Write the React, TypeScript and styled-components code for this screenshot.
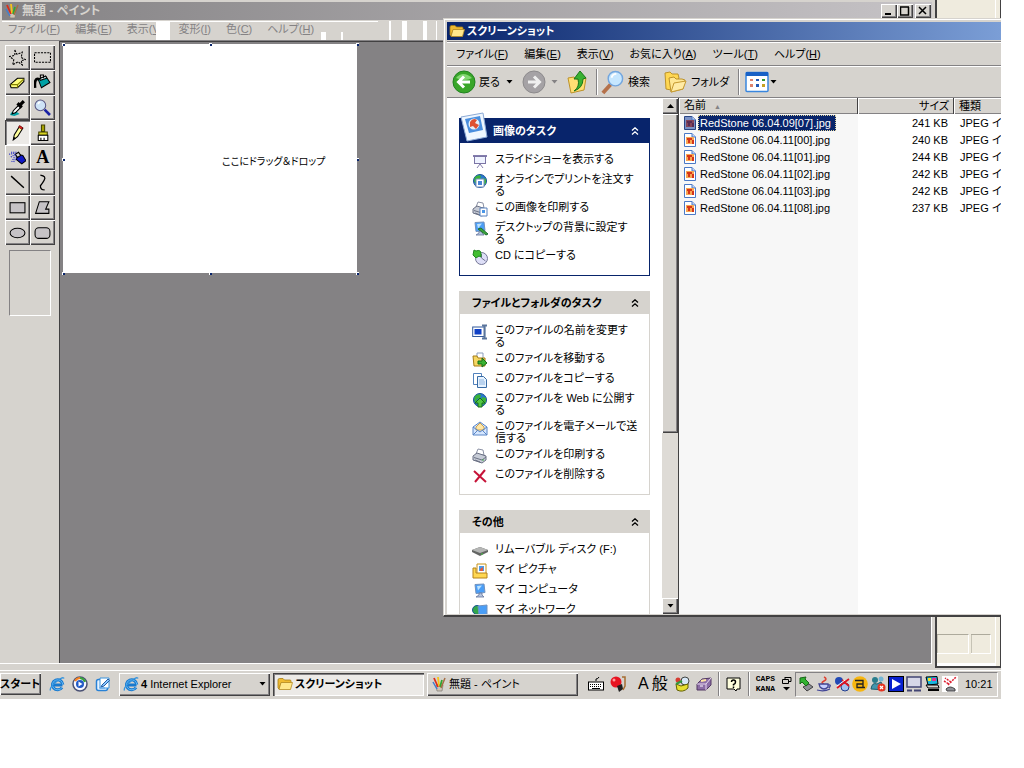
import React from "react";
import styled, { createGlobalStyle, css } from "styled-components";

const face = "#d6d3ce";
const shade = "#848284";
const dark = "#424142";
const navy = "#08246b";

const GlobalStyle = createGlobalStyle`
  * { box-sizing: border-box; }
  body { margin: 0; background: #fff; }
  body, button, table {
    font-family: "Liberation Sans", "Noto Sans CJK JP", sans-serif;
    font-size: 11px;
    line-height: 12px;
    color: #000;
    font-feature-settings: "palt";
  }
  button { border: 0; padding: 0; margin: 0; background: none; white-space: nowrap; }
  h1, h2 { margin: 0; font-size: 11px; line-height: 16px; white-space: nowrap; }
  svg { display: block; flex: none; }
`;

const raised = css`
  background: ${face};
  box-shadow: inset 1px 1px #fff, inset -1px -1px ${dark}, inset -2px -2px ${shade};
`;
const pressed = css`
  background: #eceae7;
  box-shadow: inset 1px 1px ${dark}, inset 2px 2px ${shade}, inset -1px -1px #fff;
`;

const Screen = styled.div`
  position: relative;
  margin-right: 23px;
  background: ${face};
  overflow: hidden;
`;
const Desktop = styled.div`
  display: flex;
  height: 668px;
`;

/* Paint window */
const PaintWindow = styled.section`
  flex: 1;
  min-width: 0;
  display: flex;
  flex-direction: column;
  padding: 2px 2px 4px 0;
  border-right: 1px solid ${face};
`;
const PaintTitle = styled.header`
  display: flex;
  align-items: center;
  gap: 2px;
  height: 18px;
  margin-left: 2px;
  padding: 0 1px 0 2px;
  background: linear-gradient(to right, #848284, #c6c3c6);
  color: ${face};
  h1 { flex: 1; font-size: 12px; }
`;
const CaptionButtons = styled.div`
  display: flex;
  button { ${raised} width: 16px; height: 14px; display: grid; place-items: center; }
  button:last-child { margin-left: 2px; }
`;
const PaintMenu = styled.nav`
  position: relative;
  display: flex;
  align-items: center;
  gap: 15px;
  height: 21px;
  padding: 0 8px 2px;
  border-bottom: 1px solid ${shade};
  button { color: ${shade}; }
`;
const Smudge = styled.i<{ $x: number; $w: number; $y?: number; $h?: number }>`
  position: absolute;
  left: ${(p) => p.$x}px;
  top: ${(p) => p.$y ?? 1}px;
  width: ${(p) => p.$w}px;
  height: ${(p) => p.$h ?? 19}px;
  background: #fff;
`;
const PaintBody = styled.div`
  flex: 1;
  display: flex;
  min-height: 0;
  border-bottom: 1px solid #fff;
`;
const ToolBox = styled.aside`
  width: 59px;
  padding: 4px 4px 0 5px;
`;
const ToolGrid = styled.div`
  display: grid;
  grid-template-columns: 25px 25px;
  grid-auto-rows: 25px;
`;
const Tool = styled.button<{ $on?: boolean }>`
  display: grid;
  place-items: center;
  ${(p) => (p.$on ? pressed : raised)}
`;
const ToolOptions = styled.div`
  width: 42px;
  height: 66px;
  margin: 5px 4px;
  border: 1px solid;
  border-color: ${shade} #fff #fff ${shade};
`;
const Workspace = styled.div`
  flex: 1;
  padding: 2px 0 0 3px;
  background: ${shade};
  border-left: 1px solid ${dark};
  border-top: 1px solid ${dark};
  border-right: 1px solid #fff;
`;
const Canvas = styled.div`
  position: relative;
  width: 294px;
  height: 229px;
  padding: 112px 0 0 159px;
  background: #fff;
  font-size: 10px;
  white-space: nowrap;
`;
const Handle = styled.i<{ $x: string; $y: string }>`
  position: absolute;
  left: ${(p) => p.$x};
  top: ${(p) => p.$y};
  width: 3px;
  height: 3px;
  margin: -1px;
  background: ${navy};
  box-shadow: inset 1px 1px #fff;
`;

/* Window behind the others, seen at its right edge */
const BackWindow = styled.aside`
  width: 66px;
  display: flex;
  align-items: flex-end;
  gap: 2px;
  padding: 0 8px 12px 0;
  background: #efebde;
  border: 2px solid ${dark};
  border-top: 0;
  border-right-width: 1px;
  box-shadow: inset -4px 0 #efebde, inset -5px -3px #fff;
`;
const BackPane = styled.span<{ $w: number }>`
  width: ${(p) => p.$w}px;
  height: 20px;
  border-top: 1px solid #adaa9c;
  border-bottom: 1px solid #fff;
  border-right: 1px solid #fff;
  box-shadow: inset 1px 0 #c6c3b5;
`;

/* Explorer window */
const ExplorerWindow = styled.section`
  position: absolute;
  left: 443px;
  right: 0;
  top: 18px;
  height: 599px;
  display: flex;
  flex-direction: column;
  padding: 2px 0 1px 3px;
  background: ${face};
  border: 1px solid ${face};
  border-width: 1px 0 2px 1px;
  border-bottom-color: ${dark};
  box-shadow: inset 1px 1px #fff;
`;
const ExplorerTitle = styled.header`
  display: flex;
  align-items: center;
  gap: 2px;
  height: 18px;
  margin: 1px 0 1px;
  padding: 0 2px;
  background: linear-gradient(to right, ${navy}, #7b9ed6);
  color: #fff;
`;
const ExplorerMenu = styled.nav`
  display: flex;
  align-items: center;
  gap: 16px;
  height: 25px;
  padding: 1px 9px 0;
  border-top: 1px solid ${shade};
  border-bottom: 1px solid ${shade};
  box-shadow: inset 0 1px #fff;
`;
const ExplorerTools = styled.div`
  display: flex;
  align-items: center;
  height: 32px;
  padding-left: 5px;
  border-top: 1px solid #fff;
  border-bottom: 1px solid ${shade};
`;
const ToolbarButton = styled.button<{ $w: number; $gap?: number; $indent?: number }>`
  display: flex;
  align-items: center;
  gap: ${(p) => p.$gap ?? 3}px;
  width: ${(p) => p.$w}px;
  padding-left: ${(p) => p.$indent ?? 0}px;
`;
const Divider = styled.span<{ $h: number }>`
  width: 2px;
  height: ${(p) => p.$h}px;
  border-left: 1px solid ${shade};
  border-right: 1px solid #fff;
`;
const ExplorerBody = styled.div`
  flex: 1;
  min-height: 0;
  display: flex;
`;
const TaskPane = styled.aside`
  width: 215px;
  padding: 20px 12px 0;
  background: #fff;
  overflow: hidden;
`;
const TaskGroup = styled.section<{ $main?: boolean }>`
  margin-bottom: 15px;
  border: 1px solid ${(p) => (p.$main ? navy : face)};
  border-top: 0;
`;
const TaskHead = styled.button<{ $main?: boolean }>`
  position: relative;
  display: flex;
  align-items: center;
  justify-content: space-between;
  width: 100%;
  height: ${(p) => (p.$main ? 25 : 23)}px;
  padding: 0 10px 0 ${(p) => (p.$main ? 33 : 12)}px;
  background: ${(p) => (p.$main ? navy : face)};
  color: ${(p) => (p.$main ? "#fff" : "#000")};
`;
const HeadPicture = styled.span`
  position: absolute;
  left: 0;
  bottom: 1px;
`;
const TaskList = styled.ul`
  display: flex;
  flex-direction: column;
  gap: 4px;
  margin: 0;
  padding: 10px 0 10px 12px;
  list-style: none;
`;
const TaskLink = styled.a`
  display: flex;
  gap: 7px;
  color: #000;
  text-decoration: none;
  white-space: nowrap;
`;
const ScrollBar = styled.div`
  width: 16px;
  display: flex;
  flex-direction: column;
  background: #dedbd6;
`;
const ScrollButton = styled.button`
  ${raised}
  height: 16px;
  display: grid;
  place-items: center;
`;
const Thumb = styled.div`
  ${raised}
  height: 319px;
  margin-bottom: auto;
`;
const FileList = styled.div`
  flex: 1;
  min-width: 0;
  overflow: hidden;
  border-left: 1px solid ${dark};
  background: linear-gradient(to right, #f7f7f7 179px, #fff 179px);
`;
const FileTable = styled.table`
  width: 100%;
  table-layout: fixed;
  border-collapse: collapse;
  th {
    height: 16px;
    padding: 0 5px;
    background: ${face};
    box-shadow: inset -1px 0 ${dark}, inset 1px 1px #fff, inset 0 -1px ${shade};
    font-weight: normal;
    text-align: left;
    white-space: nowrap;
  }
  th:last-child { box-shadow: inset 1px 1px #fff, inset 0 -1px ${shade}; }
  td { height: 17px; padding: 0 6px; white-space: nowrap; overflow: hidden; }
  td:first-child { padding: 0 0 0 4px; }
  td:nth-child(2), th:nth-child(2) { text-align: right; }
`;
const FileName = styled.span<{ $on?: boolean }>`
  display: flex;
  align-items: center;
  gap: 1px;
  span {
    padding: 1px 4px 1px 1px;
    border: 1px dotted ${(p) => (p.$on ? "#ded39c" : "transparent")};
    background: ${(p) => (p.$on ? navy : "none")};
    color: ${(p) => (p.$on ? "#fff" : "#000")};
  }
`;
const SortMark = styled.small`
  margin-left: 8px;
  color: ${shade};
  font-size: 7px;
`;

/* Task bar */
const TaskBar = styled.footer`
  display: flex;
  align-items: center;
  height: 31px;
  padding: 2px 3px 3px 0;
  border-top: 2px solid ${face};
  box-shadow: inset 0 1px #fff;
`;
const StartButton = styled.button`
  ${raised}
  width: 41px;
  height: 22px;
  font-weight: bold;
  text-align: left;
`;
const QuickLaunch = styled.div`
  display: flex;
  gap: 7px;
  padding: 0 8px;
`;
const WindowButtons = styled.div`
  display: flex;
  gap: 3px;
`;
const WindowButton = styled.button<{ $on?: boolean }>`
  ${(p) => (p.$on ? pressed : raised)}
  display: flex;
  align-items: center;
  gap: 2px;
  width: 151px;
  height: 23px;
  padding: 0 4px;
  font-weight: ${(p) => (p.$on ? "bold" : "normal")};
  svg:last-child:not(:first-child) { margin-left: auto; }
`;
const LanguageBar = styled.div`
  flex: 1;
  display: flex;
  align-items: center;
  justify-content: flex-end;
  gap: 6px;
`;
const InputMode = styled.span<{ $last?: boolean }>`
  font-size: 16px;
  line-height: 18px;
  margin-left: ${(p) => (p.$last ? -3 : 6)}px;
`;
const LockKeys = styled.span`
  font: bold 8px/10px "Liberation Mono", monospace;
`;
const Tray = styled.div`
  flex: none;
  display: flex;
  align-items: center;
  gap: 2px;
  width: 203px;
  height: 25px;
  padding-left: 2px;
  border: 1px solid;
  border-color: ${shade} #fff #fff ${shade};
  time { margin-left: 5px; }
`;

type IconProps = { s?: number; w?: number; b?: number; children: React.ReactNode };
const Icon = ({ s = 16, b = 16, w = s, children }: IconProps) => (
  <svg width={w} height={s} viewBox={`0 0 ${(b * w) / s} ${b}`} fill="none" aria-hidden="true">{children}</svg>
);

const FolderIcon = () => (
  <Icon>
    <path d="M1 4q0-1.500 1.500-1.500H6L7.500 4H13q1 0 1 1v2H4L2 13 1 12z" fill="#efba31" stroke="#a57d18" strokeWidth=".8" />
    <path d="M4 6.500h11.500L13.500 13.500H2z" fill="#ffe78c" stroke="#b58a21" strokeWidth=".8" />
  </Icon>
);
const PaintIcon = () => (
  <Icon>
    <path d="M5 9h7l-1 6H6z" fill="#cec3b5" stroke="#7b7973" strokeWidth=".7" />
    <path d="M3 2l4 9" stroke="#de2c18" strokeWidth="1.800" />
    <path d="M7 1l1 9" stroke="#f7c318" strokeWidth="1.800" />
    <path d="M11 4l-2 7" stroke="#31a631" strokeWidth="1.800" />
    <path d="M14 2l-4 10" stroke="#a56d42" strokeWidth="1.500" />
    <path d="M2 6l4 7" stroke="#427dce" strokeWidth="1.500" />
  </Icon>
);
const IeIcon = () => (
  <Icon>
    <path d="M13.500 9H4.500M13 11.500a5.200 5 0 1 1 .8-3" stroke="#1879ce" strokeWidth="3" />
    <path d="M13 11.500a5.200 5 0 1 1 .8-3" stroke="#63baf7" strokeWidth="1" />
    <path d="M1.500 14.500Q0 12 7 6T15 2.500" stroke="#3192de" strokeWidth="1.300" />
  </Icon>
);
const PlayerIcon = () => (
  <Icon>
    <circle cx="8" cy="8" r="7" fill="#f7f7ff" stroke="#4a5173" strokeWidth="1.500" />
    <path d="M3 5a6 6 0 0 1 5-3" stroke="#f78221" strokeWidth="2" />
    <path d="M8 2a6 6 0 0 1 5 4" stroke="#39a639" strokeWidth="2" />
    <circle cx="8" cy="8" r="4" fill="#2159c6" />
    <path d="M6.500 5.500L10.500 8l-4 2.500z" fill="#fff" />
  </Icon>
);
const ShowDesktopIcon = () => (
  <Icon>
    <rect x="1.500" y="3.500" width="11" height="11" rx="2" fill="#e7f3ff" stroke="#2982d6" strokeWidth="1.500" />
    <path d="M5 2h9v10H5z" fill="#fff" stroke="#3992de" />
    <path d="M7 9l6-6 1.500 1.500L9 10l-3 1z" fill="#8cc7ff" stroke="#215da5" />
    <path d="M4 12h6" stroke="#5aa2e7" />
  </Icon>
);
const Globe = () => (
  <>
    <circle cx="8" cy="8" r="6.500" fill="#2979ce" stroke="#185194" />
    <path d="M3 4q4-3 6-1l-1 3-3 1-1 4-2-3zM10 5l4 1v4l-3 3-2-4z" fill="#39b239" />
  </>
);
const Printer = () => (
  <>
    <path d="M4 6l2-5 5 1 1 5z" fill="#fff" stroke="#8c92a5" />
    <path d="M1 8l4-3 9 3v4l-4 3-9-3z" fill="#c6cbd6" stroke="#6b7184" />
    <path d="M2 9.500l8 2.500 4-3M3 12l5 2" stroke="#6b7184" />
    <circle cx="11" cy="12" r=".8" fill="#39b239" />
  </>
);
const Monitor = () => (
  <>
    <path d="M3 1.500l9-.5 1 8.500-9 1z" fill="#4a9ef7" stroke="#7392bd" />
    <path d="M5 3l5-.5-4 5z" fill="#bde3ff" />
    <path d="M7 10v2l-3 2h8l-2-2v-2z" fill="#b5c3de" stroke="#63759c" strokeWidth=".8" />
  </>
);
const Chevrons = () => (
  <Icon s={8} b={8}><path d="M1 3.500L4 .8l3 2.700M1 7.500L4 4.800l3 2.700" stroke="currentColor" strokeWidth="1.300" /></Icon>
);
const Arrow = ({ up, c = "#000" }: { up?: boolean; c?: string }) => (
  <svg width="7" height="4" viewBox="0 0 7 4" aria-hidden="true"><path d={up ? "M0 4h7L3.500 0z" : "M.5 0h6L3.500 3.500z"} fill={c} /></svg>
);
const JpegIcon = ({ on }: { on?: boolean }) => (
  <Icon s={14} b={14}>
    <path d="M1.500.5H9L12.500 4v9.500h-11z" fill={on ? "#7b92c6" : "#fff"} stroke={on ? "#294584" : "#4a79c6"} />
    <path d="M9 .5V4h3.500" fill="#bdd3f7" stroke="#4a79c6" />
    <rect x="3" y="4" width="8" height="7" fill={on ? "#84455a" : "#f7a652"} />
    <path d="M4 5h5v2H7v3H5V7H4zM9 7h2v4H9z" fill={on ? "#5a2c52" : "#d63418"} />
  </Icon>
);

const toolIcons: [string, React.ReactNode][] = [
  ["自由選択", <path d="M5.500 1l2 4 5-2-1 5 4 2-4 1 1 4-4-3-5 3 1-5-4-3 5-1z" stroke="#000" strokeDasharray="2 1" />],
  ["選択", <rect x=".5" y="3.500" width="15" height="9" stroke="#000" strokeDasharray="2 1" />],
  ["消しゴム", <><path d="M1 10l7-6h6v3l-6 6H2z" fill="#ffff7b" stroke="#000" /><path d="M1.500 10H8l6-5.500M8 10v3" stroke="#848200" /></>],
  ["塗りつぶし", <><path d="M4 5l7-3 4 6-8 5z" fill="#00a2a5" stroke="#000" /><path d="M5 4.500l6-2.500 1 2-6 2z" fill="#d6f3f7" stroke="#000" /><path d="M5 5Q0 3 1 13" stroke="#000" strokeWidth="2.500" /><path d="M6 5V1h3v3" stroke="#000" /></>],
  ["色の選択", <><path d="M1 15q1-4 6-3l3 2-5 2z" fill="#00a2a5" /><path d="M3 14l1-3 5-5 2 2-5 5z" fill="#fff" stroke="#000" /><path d="M8 4l4 4M9.500 6.500L14 2" stroke="#000" strokeWidth="3" /></>],
  ["拡大と縮小", <><circle cx="6" cy="6" r="5" fill="#cee3f7" stroke="#5a5984" /><path d="M4 5q0-2 2-2" stroke="#fff" strokeWidth="1.500" /><path d="M10 10l5 5" stroke="#1820a5" strokeWidth="2.500" /></>],
  ["鉛筆", <><path d="M4 15l1-5 5-8 3 2-5 8z" fill="#ffff9c" stroke="#000" /><path d="M10 1.500l3 2-1 1.500-3-2z" fill="#e72421" stroke="#630000" strokeWidth=".6" /><path d="M4 15l.5-3 2 1.500z" fill="#000" /></>],
  ["ブラシ", <><path d="M7 1h3v6H7z" fill="#a5a200" stroke="#424100" /><path d="M4.500 7.500h8v3h-8z" fill="#d6d321" stroke="#424100" /><path d="M4 10.500h9v5H4z" fill="#fff" stroke="#000" /><path d="M6.500 13v2M9.500 13v2" stroke="#000" /></>],
  ["エアブラシ", <><path d="M8 5l5 1 3 5-4 3-5-4z" fill="#1018c6" stroke="#000" /><path d="M6 5l3-2 2 3-3 2z" fill="#d6d3ce" stroke="#000" /><path d="M7 3H1M6 5L1 8M6 6l-4 7M5 4L0 5M7 8l-3 5" stroke="#1018c6" strokeDasharray="1 1" /></>],
  ["テキスト", <text x="2" y="13" fontFamily="Liberation Serif" fontWeight="bold" fontSize="17" fill="#000">A</text>],
  ["直線", <path d="M2 2l12 11" stroke="#000" strokeWidth="1.300" />],
  ["曲線", <path d="M6 1q6 1 3.500 5T6 11q0 4 4 4" stroke="#000" strokeWidth="1.200" />],
  ["四角形", <rect x="1" y="3.500" width="14" height="9.500" fill="#c6c3c6" stroke="#000" />],
  ["多角形", <path d="M5 2.500h9l-3 7h3v4H1.500z" fill="#c6c3c6" stroke="#000" />],
  ["楕円", <ellipse cx="8" cy="8.500" rx="7" ry="4.500" fill="#c6c3c6" stroke="#000" />],
  ["角丸四角形", <rect x="1" y="3.500" width="14" height="10" rx="3.500" fill="#c6c3c6" stroke="#000" />],
];

type Task = { icon: React.ReactNode; lines: string[] };
const pictureTasks: Task[] = [
  { icon: <><path d="M8 10v2M8 11l-3 4M8 11l3 4" stroke="#847dad" /><path d="M1 3h14" stroke="#847dad" strokeWidth="2" /><rect x="2.500" y="3.500" width="11" height="7" fill="#eff3ff" stroke="#7b75a5" /></>, lines: ["スライドショーを表示する"] },
  { icon: <><Globe /><path d="M4 6h8v8H4z" fill="#fff" stroke="#738ebd" /><path d="M6 8h4v4H6z" fill="#4a86d6" /></>, lines: ["オンラインでプリントを注文す", "る"] },
  { icon: <><Printer /><path d="M8 7h7v8H8z" fill="#fff" stroke="#5a82bd" /><path d="M10 9h3v3h-3z" fill="#4a96e7" /></>, lines: ["この画像を印刷する"] },
  { icon: <><Monitor /><path d="M6 8l3-1 7 6-2 1z" fill="#39a639" stroke="#216d31" /></>, lines: ["デスクトップの背景に設定す", "る"] },
  { icon: <><circle cx="9.500" cy="9.500" r="6" fill="#dedff7" stroke="#737594" /><path d="M9.500 9l4 3M9.500 9V5" stroke="#737594" /><path d="M2 1l2 1q5-2 5 3v3L7 7 4 9 1 6z" fill="#42be31" stroke="#218621" /></>, lines: ["CD にコピーする"] },
];
const fileTasks: Task[] = [
  { icon: <><rect x=".7" y="3" width="12" height="9.500" fill="#fff" stroke="#31599c" /><rect x="2.500" y="5" width="7" height="5.500" fill="#1041c6" /><path d="M10 1.500h5M10 14.500h5M12.500 2v12" stroke="#5a759c" strokeWidth="2" /></>, lines: ["このファイルの名前を変更す", "る"] },
  { icon: <><path d="M5 1h6v8H5z" fill="#fff" stroke="#8c9ebd" /><path d="M1 4h4l1 2h7v8H2z" fill="#f7d763" stroke="#a57d18" /><path d="M6 9h4V6l5 5-5 4v-3H6z" fill="#39b231" stroke="#186d18" /></>, lines: ["このファイルを移動する"] },
  { icon: <><path d="M1.500 1.500h8v11h-8z" fill="#fff" stroke="#5282bd" /><path d="M5.500 4.500h6l3 3v8h-9z" fill="#e7f3ff" stroke="#396ba5" /><path d="M7 8h5M7 10h6M7 12h6" stroke="#8cb2de" /></>, lines: ["このファイルをコピーする"] },
  { icon: <><Globe /><path d="M8 6l5 5h-3v4H6v-4H3z" fill="#52c742" stroke="#186d18" /></>, lines: ["このファイルを Web に公開す", "る"] },
  { icon: <><path d="M1 7l7-5 7 5v8H1z" fill="#d6e7ff" stroke="#5a86c6" /><path d="M4 7l4-4 4 4v3H4z" fill="#ffe7a5" stroke="#c69e52" /><path d="M1 7l7 5 7-5M1 15l5-5M15 15l-5-5" stroke="#5a86c6" /></>, lines: ["このファイルを電子メールで送", "信する"] },
  { icon: <Printer />, lines: ["このファイルを印刷する"] },
  { icon: <path d="M2 3l12 11M13 2L3 14" stroke="#c61439" strokeWidth="2" />, lines: ["このファイルを削除する"] },
];
const otherPlaces: Task[] = [
  { icon: <><path d="M0 7l8-3 8 3v2l-8 4-8-4z" fill="#636563" /><path d="M0 7l8-3 8 3-8 3z" fill="#b5b6b5" /><circle cx="10" cy="11" r=".8" fill="#39d639" /></>, lines: ["リムーバブル ディスク (F:)"] },
  { icon: <><path d="M5 1h9v11H5z" fill="#fff" stroke="#c69218" /><path d="M7 3h5v5H7z" fill="#4a9ae7" /><path d="M8 6l3-2v4H8z" fill="#de5a42" /><path d="M1 5h3v5h11v5H1z" fill="#ffd752" stroke="#b58218" /></>, lines: ["マイ ピクチャ"] },
  { icon: <Monitor />, lines: ["マイ コンピュータ"] },
  { icon: <><circle cx="5" cy="7" r="4.500" fill="#31a64a" stroke="#185194" /><path d="M6 3l9-1v9l-8 1z" fill="#4a9ef7" stroke="#7392bd" /></>, lines: ["マイ ネットワーク"] },
];

const TaskItems = ({ items }: { items: Task[] }) => (
  <TaskList>
    {items.map((t) => (
      <li key={t.lines[0]}>
        <TaskLink href="#">
          <Icon>{t.icon}</Icon>
          <span>{t.lines.map((l, i) => <React.Fragment key={l}>{i > 0 && <br />}{l}</React.Fragment>)}</span>
        </TaskLink>
      </li>
    ))}
  </TaskList>
);

const MenuItems = ({ items }: { items: [string, string][] }) => (
  <>{items.map(([t, k]) => <button key={t}>{t}(<u>{k}</u>)</button>)}</>
);

const files: [string, string][] = [
  ["RedStone 06.04.09[07].jpg", "241 KB"],
  ["RedStone 06.04.11[00].jpg", "240 KB"],
  ["RedStone 06.04.11[01].jpg", "244 KB"],
  ["RedStone 06.04.11[02].jpg", "242 KB"],
  ["RedStone 06.04.11[03].jpg", "242 KB"],
  ["RedStone 06.04.11[08].jpg", "237 KB"],
];

const trayIcons: React.ReactNode[] = [
  <><path d="M5 11l6-3 4 3-6 4z" fill="#8c8e94" stroke="#424142" /><path d="M2 2l6-1-1 2 4 4-3 3-4-4-2 2z" fill="#31b231" stroke="#186518" /></>,
  <><path d="M8 1q4 2 0 4t0 3" stroke="#de4131" strokeWidth="1.500" /><path d="M3 8h9v3q-4 4-8 0zM12 9q4-1 1 3M1 14q7 2 13-1" fill="#c6cfff" stroke="#424594" strokeWidth="1.300" /></>,
  <><circle cx="5" cy="5" r="4" fill="#2149b5" /><circle cx="11" cy="11" r="4" fill="#a5c3ef" stroke="#213c8c" /><path d="M3 12L15 3M8 4l7 6" stroke="#de1421" strokeWidth="1.800" /><path d="M3 10l8-6" stroke="#fff" /></>,
  <><circle cx="8" cy="8" r="7.800" fill="#f7b610" /><path d="M4 4.500h7v7h-6M11 8H5v3.500h8M3 4.500h3" stroke="#212021" strokeWidth="1.300" /></>,
  <><circle cx="5" cy="4" r="3" fill="#297d8c" /><circle cx="11" cy="3" r="2.500" fill="#73b6d6" /><path d="M1 13q1-7 6-5l4-2 4 8z" fill="#4296ad" stroke="#215d6b" /><circle cx="11.500" cy="11.500" r="4" fill="#e73421" /><path d="M10 10l3 3M13 10l-3 3" stroke="#fff" strokeWidth="1.300" /></>,
  <><rect x=".5" y=".5" width="15" height="15" fill="#0820ce" stroke="#000" /><path d="M4 3l9 5-9 5z" fill="#fff" /></>,
  <><rect x="1" y="1" width="14" height="10" fill="#d6d7e7" stroke="#424573" strokeWidth="1.500" /><path d="M1 14.500h5M8 14.500h7" stroke="#424573" strokeWidth="2" /></>,
  <><path d="M2 1l11-0.500 1 7.500-10 1z" fill="#18b6de" stroke="#000" /><path d="M4 2h3v3H4z" fill="#f7e321" /><path d="M8 2h4v3H8z" fill="#e73494" /><path d="M2 9h12l1 3H4z" fill="#d6d3ce" stroke="#000" /><path d="M4 14h11" stroke="#000" strokeWidth="2" /></>,
  <><rect width="16" height="16" fill="#fff" /><path d="M2 5l5 3M6 9l8-8M9 6L3 2" stroke="#de2031" strokeWidth="1.500" strokeDasharray="2 1" /><path d="M4 13q4-4 9 0v2H5z" fill="#8c8e94" stroke="#424142" /></>,
];

export default function App() {
  return (
    <>
      <GlobalStyle />
      <Screen>
        <Desktop>
          <PaintWindow>
            <PaintTitle>
              <PaintIcon />
              <h1>無題 - ペイント</h1>
              <CaptionButtons>
                <button aria-label="最小化"><Icon s={10} b={10}><path d="M1 8h6" stroke="#000" strokeWidth="2" /></Icon></button>
                <button aria-label="最大化"><Icon s={10} b={10}><path d="M.5 1v8h8V1M0 1h9" stroke="#000" strokeWidth="1.500" /></Icon></button>
                <button aria-label="閉じる"><Icon s={10} b={10}><path d="M1 1l7 7M8 1L1 8" stroke="#000" strokeWidth="1.500" /></Icon></button>
              </CaptionButtons>
            </PaintTitle>
            <PaintMenu>
              <MenuItems items={[["ファイル", "F"], ["編集", "E"], ["表示", "V"], ["変形", "I"], ["色", "C"], ["ヘルプ", "H"]]} />
              <Smudge $x={2} $w={376} $h={1} />
              <Smudge $x={156} $w={14} />
              <Smudge $x={321} $w={5} $y={12} $h={8} />
              <Smudge $x={341} $w={2} $y={12} $h={8} />
              <Smudge $x={389} $w={2} />
              <Smudge $x={402} $w={5} />
              <Smudge $x={423} $w={4} />
              <Smudge $x={436} $w={1} />
            </PaintMenu>
            <PaintBody>
              <ToolBox>
                <ToolGrid>
                  {toolIcons.map(([name, icon]) => (
                    <Tool key={name} aria-label={name} $on={name === "鉛筆"}><Icon s={17}>{icon}</Icon></Tool>
                  ))}
                </ToolGrid>
                <ToolOptions />
              </ToolBox>
              <Workspace>
                <Canvas>
                  ここにドラッグ＆ドロップ
                  {["0px", "50%", "100%"].map((x) =>
                    ["0px", "50%", "100%"].map((y) =>
                      x === "50%" && y === "50%" ? null : <Handle key={x + y} $x={x} $y={y} />
                    )
                  )}
                </Canvas>
              </Workspace>
            </PaintBody>
          </PaintWindow>
          <BackWindow>
            <BackPane $w={32} />
            <BackPane $w={20} />
          </BackWindow>
        </Desktop>

        <ExplorerWindow>
          <ExplorerTitle>
            <FolderIcon />
            <h1>スクリーンショット</h1>
          </ExplorerTitle>
          <ExplorerMenu>
            <MenuItems items={[["ファイル", "F"], ["編集", "E"], ["表示", "V"], ["お気に入り", "A"], ["ツール", "T"], ["ヘルプ", "H"]]} />
          </ExplorerMenu>
          <ExplorerTools>
            <ToolbarButton $w={70}>
              <Icon s={24} b={24}>
                <circle cx="12" cy="12" r="11" fill="#39a629" stroke="#218221" />
                <path d="M4 8q7-8 16 0-7 4-16 0z" fill="#84d773" />
                <path d="M18 12H7M12 6.500L6.500 12l5.500 5.500" stroke="#fff" strokeWidth="3" />
              </Icon>
              <span>戻る&nbsp;</span>
              <Arrow />
            </ToolbarButton>
            <ToolbarButton $w={44} $gap={5} aria-label="進む">
              <Icon s={24} b={24}>
                <circle cx="12" cy="12" r="11" fill="#a5a2a5" stroke="#8c8a8c" />
                <path d="M6 12h11M12 6.500l5.500 5.500-5.500 5.500" stroke="#efefef" strokeWidth="3" />
              </Icon>
              <Arrow c={shade} />
            </ToolbarButton>
            <ToolbarButton $w={30} aria-label="上へ">
              <Icon s={24} b={24}>
                <path d="M2 8l6-1 2 2 10-1-2 12-13 3z" fill="#ffdf73" stroke="#bd9229" />
                <path d="M8 21q6-4 4-12H8l6-8 6 7-3 1q0 9-9 12z" fill="#39b231" stroke="#187518" />
              </Icon>
            </ToolbarButton>
            <Divider $h={26} />
            <ToolbarButton $w={66} $indent={2}>
              <Icon s={25} b={26}>
                <path d="M3 24l8-9" stroke="#b5714a" strokeWidth="4" />
                <circle cx="16" cy="9" r="7.500" fill="#c6e7ff" stroke="#73a6de" strokeWidth="1.500" />
                <path d="M12 8q1-4 5-4" stroke="#fff" strokeWidth="2" />
              </Icon>
              <span>検索</span>
            </ToolbarButton>
            <ToolbarButton $w={74}>
              <Icon s={24} b={24}>
                <path d="M1 3l5-1 2 2h6l1 4-8 12-5-1z" fill="#ffd752" stroke="#bd9229" />
                <path d="M5 8l5-1 2 2h6l3 1-2 9-12 3z" fill="#ffe794" stroke="#bd9229" />
                <path d="M7 22l3-9 12-2-3 8z" fill="#ffeba5" stroke="#c69a31" />
              </Icon>
              <span>フォルダ</span>
            </ToolbarButton>
            <Divider $h={26} />
            <ToolbarButton $w={40} $gap={1} $indent={5} aria-label="表示">
              <Icon s={24} b={24}>
                <rect x="1" y="2.500" width="22" height="19" rx="1" fill="#fff" stroke="#3986de" strokeWidth="1.500" />
                <path d="M1 4h22" stroke="#1861c6" strokeWidth="4" />
                <path d="M5 9h3v2H5zM5 14h3v3H5z" fill="#de826b" />
                <path d="M11 9h3v2h-3zM11 14h3v3h-3z" fill="#2159b5" />
                <path d="M17 9h3v2h-3z" fill="#319631" />
                <path d="M17 14h3v3h-3z" fill="#c6a221" />
              </Icon>
              <Arrow />
            </ToolbarButton>
          </ExplorerTools>
          <ExplorerBody>
            <TaskPane>
              <TaskGroup $main>
                <TaskHead $main>
                  <HeadPicture>
                    <Icon s={30} b={30}>
                      <path d="M1 5L23 1l4 24-20 4z" fill="#eff7ff" stroke="#8caad6" />
                      <path d="M5 7l15-3 3 14-14 3z" fill="#4a8ede" />
                      <circle cx="14" cy="12" r="5.500" fill="#e7eff7" />
                      <path d="M10 10q3-5 7-2l-2 3 4 2-3 4-3-3-3 1z" fill="#de5131" />
                    </Icon>
                  </HeadPicture>
                  <h2>画像のタスク</h2>
                  <Chevrons />
                </TaskHead>
                <TaskItems items={pictureTasks} />
              </TaskGroup>
              <TaskGroup>
                <TaskHead><h2>ファイルとフォルダのタスク</h2><Chevrons /></TaskHead>
                <TaskItems items={fileTasks} />
              </TaskGroup>
              <TaskGroup>
                <TaskHead><h2>その他</h2><Chevrons /></TaskHead>
                <TaskItems items={otherPlaces} />
              </TaskGroup>
            </TaskPane>
            <ScrollBar>
              <ScrollButton aria-label="上へスクロール"><Arrow up /></ScrollButton>
              <Thumb />
              <ScrollButton aria-label="下へスクロール"><Arrow /></ScrollButton>
            </ScrollBar>
            <FileList>
              <FileTable>
                <colgroup><col style={{ width: 179 }} /><col style={{ width: 96 }} /><col /></colgroup>
                <thead>
                  <tr><th>名前<SortMark>▲</SortMark></th><th>サイズ</th><th>種類</th></tr>
                </thead>
                <tbody>
                  {files.map(([name, size], i) => (
                    <tr key={name}>
                      <td><FileName $on={i === 0}><JpegIcon on={i === 0} /><span>{name}</span></FileName></td>
                      <td>{size}</td>
                      <td>JPEG イ</td>
                    </tr>
                  ))}
                </tbody>
              </FileTable>
            </FileList>
          </ExplorerBody>
        </ExplorerWindow>

        <TaskBar>
          <StartButton>スタート</StartButton>
          <QuickLaunch><IeIcon /><PlayerIcon /><ShowDesktopIcon /></QuickLaunch>
          <WindowButtons>
            <WindowButton><IeIcon /><span><b>4</b> Internet Explorer</span><Arrow /></WindowButton>
            <WindowButton $on><FolderIcon /><span>スクリーンショット</span></WindowButton>
            <WindowButton><PaintIcon /><span>無題 - ペイント</span></WindowButton>
          </WindowButtons>
          <LanguageBar>
            <Icon>
              <path d="M8 5V3q2 0 3-2" stroke="#000" />
              <rect x=".5" y="6" width="15" height="8" fill="#fff" stroke="#000" />
              <path d="M2 8.500h12M2 10.500h12" stroke="#000" strokeDasharray="1 1" /><path d="M4 12.500h8" stroke="#000" />
            </Icon>
            <Icon>
              <circle cx="6" cy="6" r="5.500" fill="#e71421" /><circle cx="4" cy="4" r="1.500" fill="#ff9a9c" />
              <path d="M7 10l5-2 1 5-4 3z" fill="#212021" /><path d="M12 1h3v9l-2 4" stroke="#a56d31" strokeWidth="1.500" />
            </Icon>
            <InputMode>A</InputMode>
            <InputMode $last>般</InputMode>
            <Icon>
              <circle cx="11" cy="5" r="4" fill="#d6e7f7" stroke="#424542" /><circle cx="4" cy="4" r="2.500" fill="#d63c31" />
              <path d="M2 8l5 2 7-2v4q-5 5-11 2z" fill="#e7df31" stroke="#636100" /><path d="M2 8l6-3" stroke="#31963c" strokeWidth="2" />
            </Icon>
            <Icon>
              <path d="M1 8l5-5 9-1v7l-5 5H1z" fill="#8c6da5" stroke="#523963" /><path d="M1 8h9l5-6M10 8v6" stroke="#e7d7ef" />
              <path d="M5 5l5-1" stroke="#ffe7a5" strokeWidth="2" /><path d="M4 10h3" stroke="#fff" />
            </Icon>
            <Divider $h={24} />
            <Icon>
              <path d="M1 2h13v11h-3l-1 2-2-2H1z" fill="#ffffde" stroke="#000" />
              <path d="M5.500 6q0-2 2-2t2 2-2 2.500V9.500M7.500 10.500v1.500" stroke="#000" strokeWidth="1.500" />
            </Icon>
            <Divider $h={24} />
            <LockKeys>CAPS<br />KANA</LockKeys>
            <Icon w={14}>
              <path d="M4 1.500h6v4H8M1.500 3.500h6v4h-6zM4 1v3" stroke="#000" /><path d="M2 11h7l-3.500 3.500z" fill="#000" />
            </Icon>
          </LanguageBar>
          <Tray>
            {trayIcons.map((icon, i) => <Icon key={i}>{icon}</Icon>)}
            <time>10:21</time>
          </Tray>
        </TaskBar>
      </Screen>
    </>
  );
}
